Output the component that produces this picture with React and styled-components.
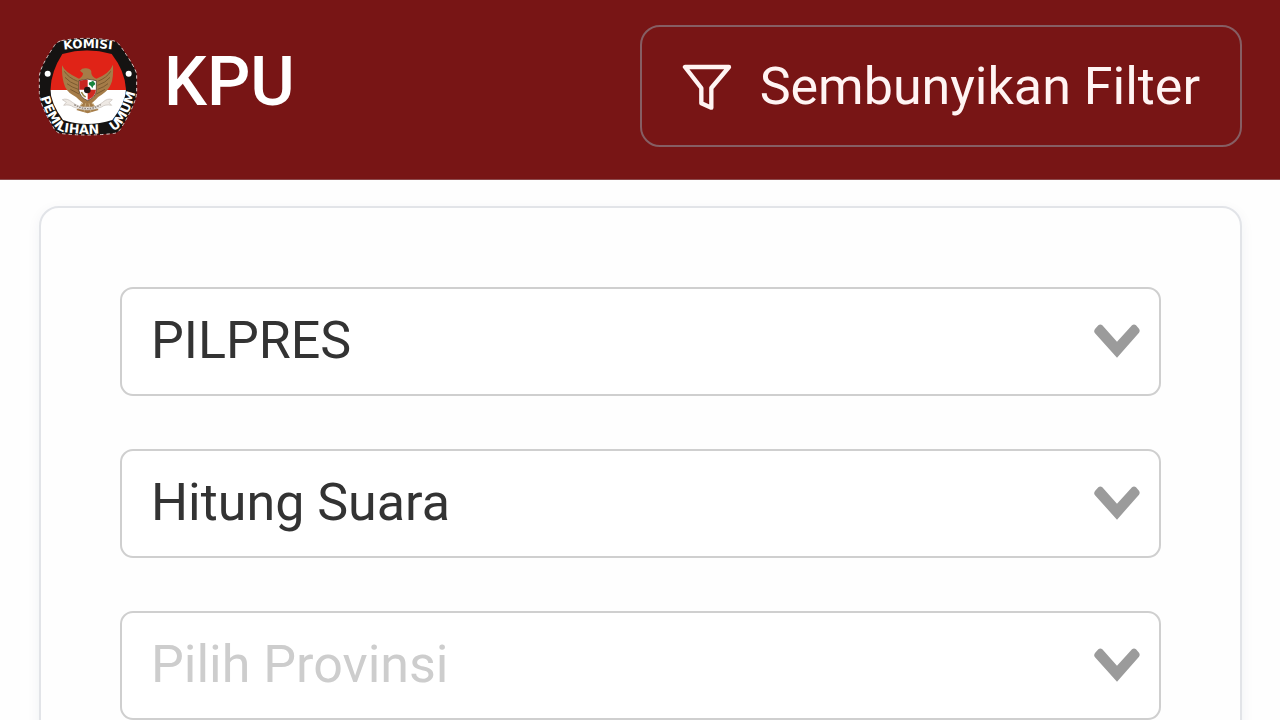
import React, { useState } from 'react';
import styled, { createGlobalStyle } from 'styled-components';

const GlobalStyle = createGlobalStyle`
  * {
    box-sizing: border-box;
  }

  body {
    margin: 0;
    background-color: #fefefe;
    font-family: Roboto, 'Liberation Sans', sans-serif;
  }
`;

const Header = styled.header`
  display: flex;
  justify-content: space-between;
  align-items: center;
  padding: 25px 38px 32px;
  background-color: #781515;
  border-bottom: 1px solid #8c4a4c;
`;

const Brand = styled.a`
  display: flex;
  align-items: center;
  gap: 26px;
  color: #fff;
  text-decoration: none;
`;

const Logo = styled.svg`
  width: 100px;
  height: 100px;
`;

const BrandName = styled.span`
  padding-bottom: 8px;
  font-size: 68px;
  font-weight: 500;
  line-height: 80px;
`;

const FilterButton = styled.button`
  display: flex;
  align-items: center;
  gap: 28px;
  padding: 29px 40px 27px;
  border: 2px solid #865e63;
  border-radius: 20px;
  background: none;
  color: #fff4f3;
  font-family: inherit;
  font-size: 52px;
  line-height: 62px;
  cursor: pointer;
`;

const FilterIcon = styled.svg`
  width: 50px;
  height: 48px;
`;

const Card = styled.form`
  display: flex;
  flex-direction: column;
  gap: 53px;
  margin: 26px 38px 26px 39px;
  padding: 79px;
  border: 2px solid #e2e4e8;
  border-radius: 20px;
  background-color: #fefefe;
  box-shadow: 0 4px 14px rgba(40, 50, 90, 0.06);
`;

// select and arrow share one grid cell
const Field = styled.div`
  display: grid;
  align-items: center;

  > * {
    grid-area: 1 / 1;
  }
`;

const Select = styled.select`
  width: 100%;
  height: 109px;
  padding: 0 80px 2px 29px;
  border: 2px solid #cfcfcf;
  border-radius: 13px;
  background-color: #fff;
  color: ${(props) => (props.$empty ? '#cdcdcd' : '#333')};
  font-family: inherit;
  font-size: 52px;
  appearance: none;
  cursor: pointer;
`;

const Arrow = styled.svg`
  justify-self: end;
  width: 46px;
  height: 34px;
  margin: 0 21px 2px 0;
  pointer-events: none;
`;

const KpuLogo = () => (
  <Logo viewBox="25 20 300 300" aria-hidden="true">
    <defs>
      <path id="arcTop" d="M90 62 Q172 50 260 62" />
      <path id="arcBottom" d="M33 204 Q48 258 75 291 Q86 306 108 309 Q172 318 236 309 Q262 303 275 286 Q304 246 317 190" />
      <clipPath id="inner">
        <path d="M98 74 Q172 52 246 74 Q286 125 289 180 Q288 220 248 272 Q172 296 100 272 Q62 220 62 180 Q65 125 98 74Z" />
      </clipPath>
    </defs>
    <path
      d="M95 34 Q172 20 250 34 Q262 36 272 50 Q318 115 321 135 V190 Q318 225 275 295 Q268 308 255 312 Q172 322 90 312 Q76 306 70 292 Q30 225 29 190 V140 Q32 112 72 52 Q80 38 95 34Z"
      fill="#151312"
      stroke="#d9c9c7"
      strokeWidth="3"
      strokeDasharray="10 9"
    />
    <g clipPath="url(#inner)">
      <rect x="55" y="50" width="240" height="133" fill="#e02317" />
      <rect x="55" y="182" width="240" height="115" fill="#fff" />
    </g>
    <circle cx="54" cy="133" r="9" fill="#fff" />
    <circle cx="297" cy="133" r="9" fill="#fff" />
    {/* garuda */}
    <path
      d="M97 108 Q106 130 148 148 Q160 142 160 132 L151 124 Q158 115 170 117 Q187 118 185 132 Q187 144 200 148 Q240 132 250 106 Q252 145 244 164 Q236 184 216 196 Q204 202 197 212 L186 222 L207 242 L174 252 L140 242 L160 222 L148 211 Q140 202 128 196 Q108 184 102 160 Q96 138 97 108Z"
      fill="#a57c48"
    />
    <path
      d="M104 126 Q116 145 144 156 M106 144 Q120 160 144 168 M112 163 Q126 174 146 180 M122 180 L148 194 M243 126 Q232 145 204 156 M241 144 Q228 160 204 168 M235 163 Q222 174 204 180 M226 180 L200 194"
      fill="none"
      stroke="#7b5a30"
      strokeWidth="3"
    />
    <path d="M158 220 L146 240 M168 222 L163 248 M178 222 L184 248 M188 220 L201 240" stroke="#c7aa78" strokeWidth="3" />
    <path d="M148 154 Q174 145 200 154 V184 Q198 204 174 214 Q151 204 148 184Z" fill="#fff" stroke="#33251a" strokeWidth="2" />
    <path d="M149 155 Q161 151 174 151 V181 H149Z" fill="#c92620" />
    <path d="M174 181 H199 Q197 203 174 212Z" fill="#d02a22" />
    <path d="M178 166 Q176 157 184 158 Q190 151 194 159 Q200 166 191 169 L188 177 L184 170Z" fill="#16843e" />
    <circle cx="173" cy="182" r="10" fill="#231713" />
    <path d="M155 188 Q160 199 168 203" stroke="#9a8746" strokeWidth="5" fill="none" />
    <path
      d="M98 211 Q112 205 128 219 Q150 236 174 233 Q199 236 219 219 Q234 205 248 211 L238 220 L246 228 Q226 224 216 233 Q174 251 131 233 Q120 224 102 228 L110 219Z"
      fill="#eee9e4"
      stroke="#c4bdb6"
      strokeWidth="2"
    />
    <path d="M134 226 Q174 250 213 226" stroke="#8e857d" strokeWidth="4" strokeDasharray="5 3" fill="none" />
    <g fill="#fff" fontFamily="'DejaVu Sans', sans-serif" fontWeight="700" fontSize="38">
      <text fontSize="36">
        <textPath href="#arcTop" startOffset="50%" textAnchor="middle">KOMISI</textPath>
      </text>
      <text>
        <textPath href="#arcBottom">PEMILIHAN</textPath>
      </text>
      <text>
        <textPath href="#arcBottom" startOffset="100%" textAnchor="end">UMUM</textPath>
      </text>
    </g>
  </Logo>
);

const fields = [
  { name: 'pemilihan', label: 'Jenis pemilihan', options: ['PILPRES'] },
  { name: 'tahapan', label: 'Tahapan', options: ['Hitung Suara'] },
  { name: 'provinsi', label: 'Provinsi', placeholder: 'Pilih Provinsi', options: [] },
];

const App = () => {
  const [values, setValues] = useState({
    pemilihan: 'PILPRES',
    tahapan: 'Hitung Suara',
    provinsi: '',
  });

  const handleChange = (e) => {
    setValues({ ...values, [e.target.name]: e.target.value });
  };

  return (
    <>
      <GlobalStyle />
      <Header>
        <Brand href="#">
          <KpuLogo />
          <BrandName>KPU</BrandName>
        </Brand>
        <FilterButton type="button">
          <FilterIcon viewBox="155 142 150 144" aria-hidden="true">
            <path
              d="M164 154 H296 L243 217 V276 L213 263 V217Z"
              fill="none"
              stroke="currentColor"
              strokeWidth="13"
              strokeLinejoin="round"
            />
          </FilterIcon>
          Sembunyikan Filter
        </FilterButton>
      </Header>
      <Card>
        {fields.map((field) => (
          <Field key={field.name}>
            <Select
              name={field.name}
              aria-label={field.label}
              value={values[field.name]}
              onChange={handleChange}
              $empty={!values[field.name]}
            >
              {field.placeholder && <option value="">{field.placeholder}</option>}
              {field.options.map((option) => (
                <option key={option} value={option}>{option}</option>
              ))}
            </Select>
            <Arrow viewBox="71 162 138 102" aria-hidden="true">
              <path
                d="M84 166 Q90 161 96 166 L140 215 L185 166 Q191 161 197 166 L206 176 Q210 182 206 188 L140 263 L74 190 Q69 184 74 177Z"
                fill="#9b9b9b"
              />
            </Arrow>
          </Field>
        ))}
      </Card>
    </>
  );
};

export default App;
